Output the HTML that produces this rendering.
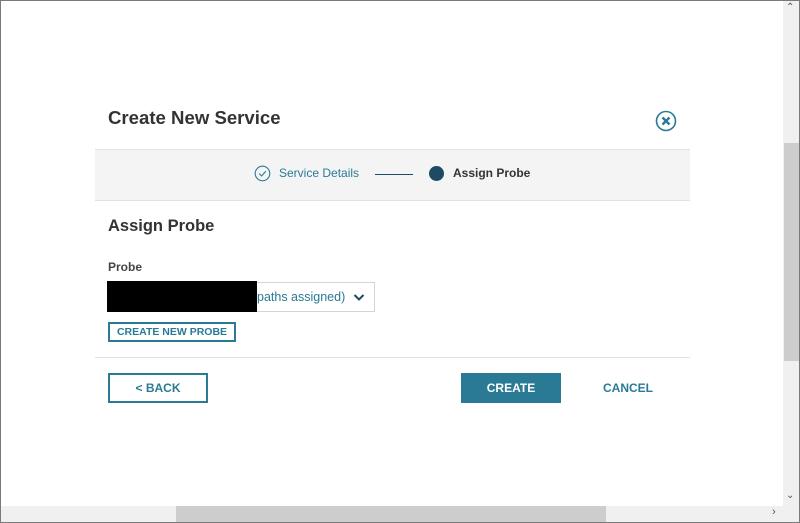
<!DOCTYPE html>
<html><head><style>
*{margin:0;padding:0;box-sizing:border-box}
body{width:800px;height:523px;position:relative;overflow:hidden;background:#fff;font-family:"Liberation Sans",sans-serif}
.a{position:absolute}
.t{white-space:nowrap}
</style></head><body>
<div class="a" style="left:0;top:0;width:800px;height:523px;border:1px solid #7a7a7a"></div>
<div class="a t" style="left:108px;top:107px;font-size:18.6px;font-weight:bold;color:#333">Create New Service</div>
<svg class="a" style="left:655px;top:110px" width="22" height="22" viewBox="0 0 22 22"><circle cx="11" cy="11" r="9.5" fill="none" stroke="#2a7a95" stroke-width="1.6"/><path d="M7.5 7.5L14.5 14.5M14.5 7.5L7.5 14.5" stroke="#2a7a95" stroke-width="2.4"/></svg>
<div class="a" style="left:95px;top:149px;width:595px;height:52px;background:#f4f4f4;border-top:1px solid #e2e2e2;border-bottom:1px solid #e2e2e2"></div>
<svg class="a" style="left:254px;top:165px" width="17" height="17" viewBox="0 0 17 17"><circle cx="8.5" cy="8.5" r="7.3" fill="none" stroke="#2a7a95" stroke-width="1.1"/><path d="M5.2 8.6L7.6 11L11.8 6.3" fill="none" stroke="#2a7a95" stroke-width="1.1"/></svg>
<div class="a t" style="left:279px;top:166px;font-size:12px;color:#2a7a95">Service Details</div>
<div class="a" style="left:375px;top:174px;width:38px;height:1px;background:#1f4a63"></div>
<div class="a" style="left:429px;top:166px;width:15px;height:15px;border-radius:50%;background:#1f4a63"></div>
<div class="a t" style="left:453px;top:166px;font-size:12px;font-weight:bold;color:#333">Assign Probe</div>
<div class="a t" style="left:108px;top:217px;font-size:16.5px;font-weight:bold;color:#333">Assign Probe</div>
<div class="a t" style="left:108px;top:260px;font-size:12px;font-weight:bold;color:#444">Probe</div>
<div class="a" style="left:108px;top:282px;width:267px;height:30px;border:1px solid #d5d5d5"></div>
<div class="a" style="left:107px;top:281px;width:150px;height:31px;background:#000"></div>
<div class="a t" style="left:257px;top:290px;font-size:12.5px;color:#2a7a95">paths assigned)</div>
<svg class="a" style="left:353px;top:293px" width="12" height="9" viewBox="0 0 12 9"><path d="M1.5 2L6 6.5L10.5 2" fill="none" stroke="#1f4a63" stroke-width="2"/></svg>
<div class="a t" style="left:108px;top:322px;width:128px;height:20px;border:2px solid #2a7a95;font-size:10.5px;font-weight:bold;color:#2a7a95;text-align:center;line-height:16px">CREATE NEW PROBE</div>
<div class="a" style="left:95px;top:357px;width:595px;height:1px;background:#e2e2e2"></div>
<div class="a t" style="left:108px;top:373px;width:100px;height:30px;border:2px solid #2a7a95;font-size:12px;font-weight:bold;color:#2a7a95;text-align:center;line-height:26px">&lt; BACK</div>
<div class="a t" style="left:461px;top:373px;width:100px;height:30px;background:#2a7a95;font-size:12px;font-weight:bold;color:#fff;text-align:center;line-height:30px">CREATE</div>
<div class="a t" style="left:603px;top:381px;font-size:12px;font-weight:bold;color:#2a7a95">CANCEL</div>
<div class="a" style="left:783px;top:1px;width:16px;height:505px;background:#f0f0f0"></div>
<div class="a" style="left:784px;top:143px;width:15px;height:218px;background:#cdcdcd"></div>
<div class="a t" style="left:786px;top:2px;font-size:10px;color:#555">&#8963;</div>
<div class="a t" style="left:786px;top:490px;font-size:10px;color:#555">&#8964;</div>
<div class="a" style="left:1px;top:506px;width:798px;height:16px;background:#f0f0f0"></div>
<div class="a" style="left:176px;top:506px;width:430px;height:16px;background:#cdcdcd"></div>
<div class="a t" style="left:772px;top:506px;font-size:11px;color:#555">&#8250;</div>
</body></html>
